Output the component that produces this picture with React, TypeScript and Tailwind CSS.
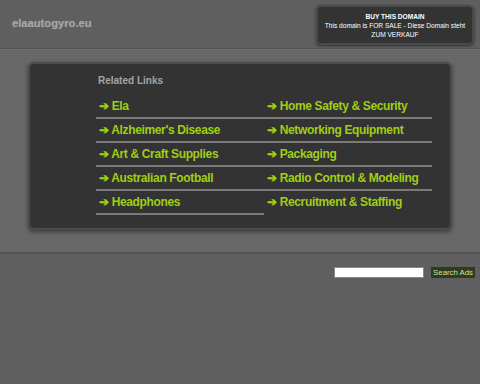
import React from "react";

const left = ["Ela", "Alzheimer's Disease", "Art & Craft Supplies", "Australian Football", "Headphones"];
const right = ["Home Safety & Security", "Networking Equipment", "Packaging", "Radio Control & Modeling", "Recruitment & Staffing"];

function Item({ t, last }: { t: string; last?: boolean }) {
  return (
    <div className={`h-[24px] flex items-center pl-[3px] border-b-2 ${last ? "border-transparent" : "border-[#7a7a7a]"}`}>
      <span className="text-[12px] font-bold text-[#9fcf14] leading-none tracking-[-0.35px]">➔ {t}</span>
    </div>
  );
}

export default function App() {
  return (
    <div className="w-[480px] h-[384px] bg-[#5f5f5f] relative overflow-hidden" style={{ fontFamily: '"Liberation Sans", Arial, sans-serif' }}>
      <div className="h-[48px] flex items-center pl-[12px] pb-[2px]">
        <span className="text-[11.2px] font-bold text-[#a8a8a8]" style={{ textShadow: "0 0 2px #777" }}>elaautogyro.eu</span>
      </div>
      <div className="h-[1px] bg-[#525252]" />
      <div className="h-[1px] bg-[#707070]" />
      <div className="bg-[#676767] h-[202px] pt-[12px] px-[28px]">
        <div className="h-[168px] rounded-[6px] bg-[#333333] border-2 border-[#4c4c4c] shadow-[0_2px_4px_rgba(0,0,0,0.45)] pl-[66px] pr-[18px] pt-[10px]">
          <div className="text-[10px] font-bold text-[#a5a5a5] h-[14px] leading-[14px] pl-[2px]">Related Links</div>
          <div className="grid grid-cols-2 mt-[7px]">
            <div className="flex flex-col">
              {left.map((t) => (
                <Item key={t} t={t} />
              ))}
            </div>
            <div className="flex flex-col">
              {right.map((t, i) => (
                <Item key={t} t={t} last={i === right.length - 1} />
              ))}
            </div>
          </div>
        </div>
      </div>
      <div className="h-[2px] bg-[#555555]" />
      <div className="flex justify-end items-center gap-[7px] pr-[5px] mt-[13px]">
        <div className="w-[90px] h-[11px] bg-white border border-[#888]" />
        <div className="h-[11px] px-[2px] bg-[#2f3a22] text-[7.8px] leading-[11px] text-[#cde6a0]">Search Ads</div>
      </div>
      <div className="absolute left-[316px] top-[5px] w-[158px] h-[40px] rounded-[5px] bg-[#333333] border-2 border-[#4a4a4a] shadow-[0_1px_3px_rgba(0,0,0,0.5)] flex flex-col items-center justify-center text-white text-[6.6px] leading-[9px] text-center">
        <div className="font-bold">BUY THIS DOMAIN</div>
        <div>This domain is FOR SALE - Diese Domain steht</div>
        <div>ZUM VERKAUF</div>
      </div>
    </div>
  );
}
